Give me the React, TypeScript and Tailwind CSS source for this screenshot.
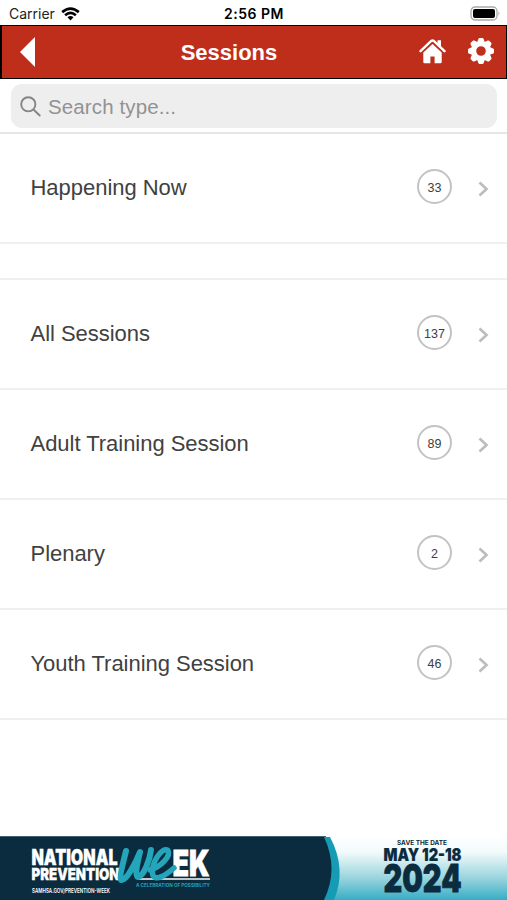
type Session = { name: string; count: number };

const sessions: Session[] = [
  { name: 'All Sessions', count: 137 },
  { name: 'Adult Training Session', count: 89 },
  { name: 'Plenary', count: 2 },
  { name: 'Youth Training Session', count: 46 },
];

function StatusBar() {
  return (
    <div className="flex h-[25px] shrink-0 items-center justify-between pt-[2px] pr-[6px] pl-[9px] text-black">
      <div className="flex w-[120px] items-center gap-[6px] font-['Inter',sans-serif] text-[14px] text-[#222]">
        Carrier
        <svg width="19" height="14" viewBox="0 0 19 14" fill="none" stroke="#000" strokeWidth="2.7">
          <path d="M1.2 5.1Q9.5-2 17.8 5.1" />
          <path d="M4.1 8.2Q9.5 3.7 14.9 8.2" />
          <path d="M6.5 10.2Q9.5 8 12.5 10.2L9.5 13.5Z" fill="#000" stroke="none" />
        </svg>
      </div>
      <div className="pr-[2px] font-['Inter',sans-serif] text-[14px] font-semibold tracking-[0.5px] whitespace-nowrap">2:56 PM</div>
      <div className="flex w-[120px] justify-end">
        <svg width="31" height="15" viewBox="0 0 31 15">
          <rect x="1" y="1" width="26" height="13" rx="4" fill="#fff" stroke="#aaa" strokeWidth="1.3" />
          <rect x="3" y="3" width="22" height="9" rx="2" fill="#000" />
          <path d="M28.5 5.3Q30.5 7.5 28.5 9.7Z" fill="#aaa" />
        </svg>
      </div>
    </div>
  );
}

const teeth = [0, 45, 90, 135, 180, 225, 270, 315];

function GearIcon() {
  return (
    <svg width="28" height="28" viewBox="-14 -14 28 28">
      <circle r="7.3" fill="none" stroke="#fff" strokeWidth="5" />
      {teeth.map((angle) => (
        <path key={angle} d="M-4-8.5-2.6-12.1Q-2.3-13-1.4-13H1.4Q2.3-13 2.6-12.1L4-8.5Z" fill="#fff" transform={`rotate(${angle})`} />
      ))}
    </svg>
  );
}

function Header() {
  return (
    <header className="flex h-[54px] shrink-0 items-center justify-between border border-l-2 border-black bg-[#bf2e1b] pr-[11px] pl-[18px] text-white">
      <div className="flex w-[24px]">
        <svg width="16" height="32" viewBox="0 0 16 32" fill="currentColor">
          <path d="M15 1V31L0 16Z" />
        </svg>
      </div>
      <h1 className="text-[22px] font-bold">Sessions</h1>
      <div className="flex w-[81px] items-center justify-end gap-[21px] pb-[2px]">
        <svg width="27" height="26" viewBox="0 0 27 26">
          <path d="M1.5 13.2 12.2 3Q13.5 1.9 14.8 3L25.5 13.2" fill="none" stroke="#fff" strokeWidth="2.4" strokeLinecap="round" />
          <path d="M18.5 2.2H22V9L18.5 5.7Z" fill="#fff" />
          <path d="M4.3 14.5 13.5 6 22.7 14.5V24Q22.7 25.3 21.4 25.3H15.6V18.5H11.4V25.3H5.6Q4.3 25.3 4.3 24Z" fill="#fff" />
        </svg>
        <GearIcon />
      </div>
    </header>
  );
}

function SearchBar() {
  return (
    <div className="flex h-[55px] shrink-0 flex-col border-b-2 border-[#e6e6e6] pt-[5px] pr-[10px] pl-[11px]">
      <label className="flex h-[44px] items-center gap-[7px] rounded-[11px] bg-[#eee] pl-[9px]">
        <svg width="21" height="21" viewBox="0 0 21 21" fill="none" stroke="#858585" strokeWidth="1.9" strokeLinecap="round">
          <circle cx="8.3" cy="8.3" r="7.1" />
          <path d="M13.5 13.5 19.7 19.5" />
        </svg>
        <span className="pt-[2px] text-[20.5px] tracking-[0.12px] text-[#929292]">Search type...</span>
      </label>
    </div>
  );
}

function SessionRow({ name, count }: Session) {
  return (
    <li className="flex h-[110px] items-center border-b-2 border-[#f0f0f0] pr-[18px] pb-[2px] pl-[30.5px]">
      <span className="flex-1 text-[22px] tracking-[-0.03px] text-[#414141]">{name}</span>
      <span className="mt-[-2px] flex h-[35px] w-[35px] items-center justify-center rounded-full border-2 border-[#c3c3c3] pt-[4px] text-[12.5px] tracking-[0.1px] text-[#404040]">
        {count}
      </span>
      <svg className="mt-[4px] ml-[26px]" width="11" height="16" viewBox="0 0 11 16" fill="none" stroke="#bdbdbd" strokeWidth="2.7">
        <path d="M1.5 1.5 8.5 8 1.5 14.5" />
      </svg>
    </li>
  );
}

function Banner() {
  return (
    <svg className="mt-auto block shrink-0" width="507" height="64" viewBox="0 836 507 64">
      <defs>
        <linearGradient id="sky" x1="0" y1="0" x2="0" y2="1">
          <stop offset="0" stopColor="#fff" />
          <stop offset=".25" stopColor="#f2fafb" />
          <stop offset=".65" stopColor="#9bd5df" />
          <stop offset="1" stopColor="#37adc4" />
        </linearGradient>
      </defs>
      <rect y="836" width="507" height="64" fill="url(#sky)" />
      <path d="M320 837H330Q347 869 334 900H320Z" fill="#169bb5" />
      <path d="M0 837H324Q339 869 324 900H0Z" fill="#0b2b3e" />
      <path d="M0 836.5H326" stroke="#45616f" />
      <g fill="#fff" stroke="#fff" fontFamily="Inter, sans-serif" fontWeight="900">
        <text x="31.500" y="865" fontSize="21.5" strokeWidth=".4" textLength="86" lengthAdjust="spacingAndGlyphs">NATIONAL</text>
        <text x="31.500" y="880" fontSize="16.5" strokeWidth=".3" textLength="88" lengthAdjust="spacingAndGlyphs">PREVENTION</text>
        <text x="32" y="893" fontSize="6" fontWeight="600" stroke="none" textLength="78" lengthAdjust="spacingAndGlyphs">SAMHSA.GOV/PREVENTION-WEEK</text>
        <text x="172.500" y="875.5" fontSize="36" strokeWidth=".8" textLength="37" lengthAdjust="spacingAndGlyphs">EK</text>
      </g>
      <path d="M139 879H210" stroke="#fff" strokeWidth="1.6" />
      <g fill="none" stroke="#25a5b9" strokeLinecap="round" strokeLinejoin="round">
        <path d="M126 851C124 859 119 878 121 880C126 882 136 862 140 852C138 860 134 876 138 877C144 876 150 859 151 850" strokeWidth="6" />
        <path d="M150 870C161 867 171 856 168 850.500C162 846 151 863 152.500 874C155 883 167 874 174 868" strokeWidth="5.5" />
      </g>
      <text x="136" y="887" fill="#23a2b8" fontFamily="Inter, sans-serif" fontWeight="700" fontSize="5" textLength="74" lengthAdjust="spacingAndGlyphs">A CELEBRATION OF POSSIBILITY</text>
      <g fill="#0b2b3e" stroke="#0b2b3e" fontFamily="Inter, sans-serif" fontWeight="900">
        <text x="397" y="845" fontSize="6.6" fontWeight="700" stroke="none" textLength="50" lengthAdjust="spacingAndGlyphs">SAVE THE DATE</text>
        <text x="383.500" y="861" fontSize="17.5" strokeWidth=".2" textLength="78" lengthAdjust="spacingAndGlyphs">MAY 12-18</text>
        <text x="383.500" y="892" fontSize="38" strokeWidth=".8" textLength="78" lengthAdjust="spacingAndGlyphs">2024</text>
      </g>
    </svg>
  );
}

export default function App() {
  return (
    <div className="flex h-[900px] w-[507px] flex-col overflow-hidden bg-white font-['Liberation_Sans',sans-serif]">
      <StatusBar />
      <Header />
      <SearchBar />
      <main>
        <ul>
          <SessionRow name="Happening Now" count={33} />
        </ul>
        <ul className="mt-[34px] border-t-2 border-[#f0f0f0]">
          {sessions.map((s) => (
            <SessionRow key={s.name} {...s} />
          ))}
        </ul>
      </main>
      <Banner />
    </div>
  );
}
